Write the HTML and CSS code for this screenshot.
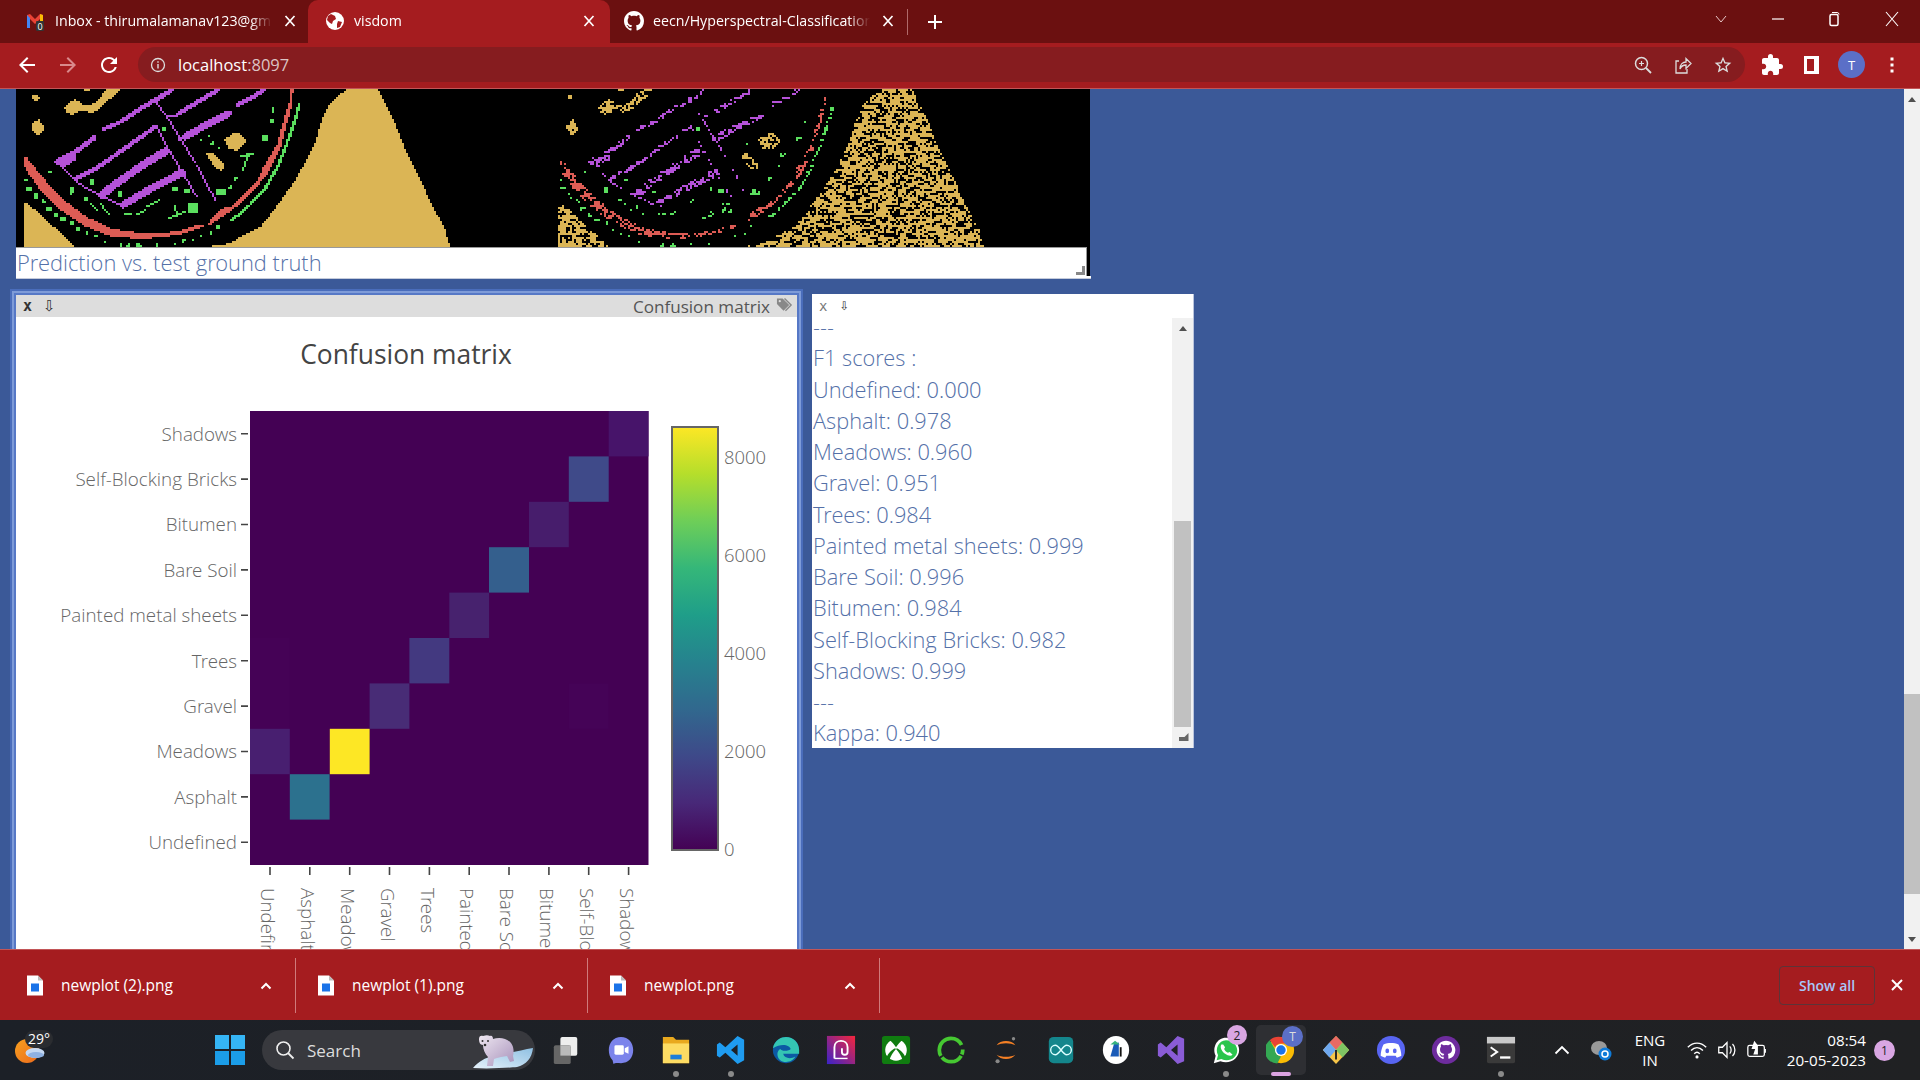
FILE: index.html
```html
<!DOCTYPE html>
<html lang="en">
<head>
<meta charset="utf-8">
<title>visdom</title>
<link rel="stylesheet" href="styles.css">
</head>
<body>
<header class="tabstrip">
  <div class="tab tab-first">
    <svg class="tab-icon" viewBox="0 0 20 20"><path d="M2 17V4l3-1 5 5 5-5 3 1v13h-3V8l-5 5-5-5v9z" fill="#ea4335"/><path d="M2 17V4l3 3v10z" fill="#4285f4"/><path d="M18 4v6l-3 2V3z" fill="#fbbc04"/><rect x="11" y="10" width="8" height="10" rx="1" fill="#333"/><text x="15" y="18.5" class="tab-badge-text">0</text></svg>
    <span class="tab-title">Inbox - thirumalamanav123@gmail.com</span>
    <svg class="tab-x" viewBox="0 0 12 12"><path d="M1.500 1l9 10M10.500 1l-9 10" stroke="#fff" stroke-width="1.700"/></svg>
  </div>
  <div class="tab tab-active">
    <svg class="tab-icon" viewBox="0 0 20 20"><circle cx="10" cy="10" r="9" fill="#fff"/><path d="M6 3l4 2 1 3-3 2-1 3-2-1-3-3 1-4zM13 10l4 1-2 5-3 1 0-4z" fill="#a51c1f"/></svg>
    <span class="tab-title">visdom</span>
    <svg class="tab-x" viewBox="0 0 12 12"><path d="M1.500 1l9 10M10.500 1l-9 10" stroke="#fff" stroke-width="1.700"/></svg>
  </div>
  <div class="tab tab-third">
    <svg class="tab-icon" viewBox="0 0 16 16"><path fill="#fff" d="M8 0C3.58 0 0 3.58 0 8c0 3.54 2.29 6.53 5.47 7.59.4.07.55-.17.55-.38 0-.19-.01-.82-.01-1.49-2.01.37-2.53-.49-2.69-.94-.09-.23-.48-.94-.82-1.13-.28-.15-.68-.52-.01-.53.63-.01 1.08.58 1.23.82.72 1.21 1.87.87 2.33.66.07-.52.28-.87.51-1.07-1.78-.2-3.64-.89-3.64-3.95 0-.87.31-1.59.82-2.15-.08-.2-.36-1.02.08-2.12 0 0 .67-.21 2.2.82.64-.18 1.32-.27 2-.27.68 0 1.36.09 2 .27 1.53-1.04 2.2-.82 2.2-.82.44 1.1.16 1.92.08 2.12.51.56.82 1.27.82 2.15 0 3.07-1.87 3.75-3.65 3.95.29.25.54.73.54 1.48 0 1.07-.01 1.93-.01 2.2 0 .21.15.46.55.38A8.013 8.013 0 0016 8c0-4.42-3.58-8-8-8z"/></svg>
    <span class="tab-title">eecn/Hyperspectral-Classification</span>
    <svg class="tab-x" viewBox="0 0 12 12"><path d="M1.500 1l9 10M10.500 1l-9 10" stroke="#fff" stroke-width="1.700"/></svg>
  </div>
  <span class="tab-sep"></span>
  <svg class="new-tab" viewBox="0 0 16 16"><path d="M8 1v14M1 8h14" stroke="#fff" stroke-width="2"/></svg>
  <div class="win-controls">
    <svg class="win-ctl" viewBox="0 0 16 16"><path d="M3 5l5 6 5-6" fill="none" stroke="#e8c8c8" stroke-width="1"/></svg>
    <svg class="win-ctl" viewBox="0 0 16 16"><path d="M2 8h12" stroke="#fff" stroke-width="1.200"/></svg>
    <svg class="win-ctl" viewBox="0 0 16 16"><rect x="3" y="3.500" width="8" height="11" rx="1.500" fill="none" stroke="#fff" stroke-width="1.500"/><path d="M5 1.500h5a2 2 0 012 2" fill="none" stroke="#fff"/></svg>
    <svg class="win-ctl" viewBox="0 0 16 16"><path d="M2 1l12 14M14 1L2 15" stroke="#fff" stroke-width="1.100"/></svg>
  </div>
</header>

<nav class="toolbar">
  <svg class="nav-icon" viewBox="0 0 24 24"><path fill="#fff" d="M20 11H7.830l5.590-5.590L12 4l-8 8 8 8 1.410-1.410L7.830 13H20v-2z"/></svg>
  <svg class="nav-icon" viewBox="0 0 24 24"><path fill="#d98a8c" d="M4 11h12.170l-5.590-5.590L12 4l8 8-8 8-1.410-1.410L16.170 13H4v-2z"/></svg>
  <svg class="nav-icon" viewBox="0 0 24 24"><path fill="#fff" d="M17.650 6.350A7.958 7.958 0 0012 4c-4.420 0-7.990 3.580-7.990 8s3.570 8 7.990 8c3.730 0 6.840-2.550 7.730-6h-2.080A5.990 5.990 0 0112 18c-3.310 0-6-2.690-6-6s2.690-6 6-6c1.660 0 3.140.690 4.220 1.780L13 11h7V4l-2.350 2.350z"/></svg>
  <div class="omnibox">
    <svg class="omni-info" viewBox="0 0 16 16"><circle cx="8" cy="8" r="6.500" fill="none" stroke="#ddd" stroke-width="1.300"/><path d="M8 7v4.500M8 4.300v1.400" stroke="#ddd" stroke-width="1.400"/></svg>
    <span class="url">localhost<span class="url-port">:8097</span></span>
    <div class="omni-actions">
      <svg class="omni-icon" viewBox="0 0 20 20"><circle cx="8.500" cy="8.500" r="6" fill="none" stroke="#ddd" stroke-width="1.500"/><path d="M13 13l5 5" stroke="#ddd" stroke-width="1.800"/><path d="M8.500 6v5M6 8.500h5" stroke="#ddd" stroke-width="1.200"/></svg>
      <svg class="omni-icon" viewBox="0 0 20 20"><path d="M6 6H3v12h11v-4" fill="none" stroke="#ddd" stroke-width="1.300"/><path d="M7 14c0-5 3-7 6-7V3.500L18 8.500l-5 5V10c-3 0-5 1.500-6 4z" fill="none" stroke="#ddd" stroke-width="1.300"/></svg>
      <svg class="omni-icon" viewBox="0 0 24 24"><path fill="#ddd" d="M22 9.240l-7.190-.620L12 2 9.190 8.630 2 9.240l5.460 4.730L5.820 21 12 17.270 18.180 21l-1.630-7.030L22 9.240zM12 15.400l-3.760 2.270 1-4.280-3.320-2.880 4.380-.380L12 6.100l1.710 4.040 4.380.380-3.320 2.880 1 4.280L12 15.400z"/></svg>
    </div>
  </div>
  <div class="tool-actions">
    <svg class="nav-icon" viewBox="0 0 24 24"><path fill="#fff" d="M20.500 11H19V7c0-1.100-.9-2-2-2h-4V3.500a2.500 2.500 0 00-5 0V5H4c-1.100 0-1.990.9-1.990 2v3.800H3.500c1.490 0 2.700 1.210 2.700 2.700s-1.210 2.700-2.700 2.700H2V20c0 1.100.9 2 2 2h3.800v-1.500c0-1.490 1.210-2.700 2.700-2.700s2.700 1.210 2.700 2.700V22H17c1.100 0 2-.9 2-2v-4h1.500a2.500 2.500 0 000-5z"/></svg>
    <svg class="nav-icon" viewBox="0 0 24 24"><path fill="#fff" d="M5 3h15v18H5z"/><path fill="#a51c1f" d="M8 6h7v12H8z"/></svg>
    <span class="avatar">T</span>
    <svg class="nav-icon" viewBox="0 0 24 24"><path d="M12 4.500v3M12 10.500v3M12 16.500v3" stroke="#fff" stroke-width="3"/></svg>
  </div>
</nav>

<main class="viewport">
  <div class="desktop">
    <section class="pane pane-image">
      <canvas id="maps" class="maps" width="537" height="79"></canvas>
      <div class="caption">Prediction vs. test ground truth<span class="resize-mark"></span></div>
      <div class="caption-foot"></div>
    </section>

    <section class="pane pane-plot">
      <div class="plot-bar">
        <span class="bar-x">x</span>
        <span class="bar-down">⇩</span>
        <span class="plot-bar-title">Confusion matrix</span>
        <svg class="bar-tag" viewBox="0 0 18 16"><path d="M1 1h6l7 7-6 6-7-7z" fill="#888"/><path d="M9 1l7 7-6 6" fill="none" stroke="#888" stroke-width="1.500"/><circle cx="4" cy="4" r="1.200" fill="#ddd"/></svg>
      </div>
      <svg class="plot" viewBox="16 317 781 640">
        <defs>
          <linearGradient id="viridis" x1="0" y1="1" x2="0" y2="0">
            <stop offset="0" stop-color="#440154"/><stop offset=".111" stop-color="#482878"/>
            <stop offset=".222" stop-color="#3e4989"/><stop offset=".333" stop-color="#31688e"/>
            <stop offset=".444" stop-color="#26828e"/><stop offset=".556" stop-color="#1f9e89"/>
            <stop offset=".667" stop-color="#35b779"/><stop offset=".778" stop-color="#6ece58"/>
            <stop offset=".889" stop-color="#b5de2b"/><stop offset="1" stop-color="#fde725"/>
          </linearGradient>
        </defs>
        <text x="406" y="364" class="plot-title" text-anchor="middle">Confusion matrix</text>
        <rect x="250" y="411" width="398.500" height="454" fill="#440154"/>
        <rect x="250" y="638" width="39.800" height="91" fill="#450256"/>
        <rect x="568.800" y="683.400" width="39.800" height="45.400" fill="#450357"/>
        <rect x="608.700" y="411" width="39.800" height="45.400" fill="#47146a"/>
        <rect x="568.800" y="456.400" width="39.900" height="45.400" fill="#3f4a89"/>
        <rect x="529" y="501.800" width="39.800" height="45.400" fill="#471d6c"/>
        <rect x="489" y="547.200" width="40" height="45.400" fill="#345f8d"/>
        <rect x="449.300" y="592.600" width="39.800" height="45.400" fill="#47226e"/>
        <rect x="409.400" y="638" width="39.900" height="45.400" fill="#433980"/>
        <rect x="369.600" y="683.400" width="39.800" height="45.400" fill="#482c76"/>
        <rect x="250" y="728.800" width="39.800" height="45.400" fill="#481f70"/>
        <rect x="329.800" y="728.800" width="39.800" height="45.400" fill="#fde725"/>
        <rect x="289.800" y="774.200" width="39.800" height="45.400" fill="#2c718e"/>
        <g class="tick-y" text-anchor="end">
          <text x="237" y="440.500">Shadows</text><text x="237" y="485.500">Self-Blocking Bricks</text>
          <text x="237" y="531">Bitumen</text><text x="237" y="576.500">Bare Soil</text>
          <text x="237" y="621.500">Painted metal sheets</text><text x="237" y="667.500">Trees</text>
          <text x="237" y="712.500">Gravel</text><text x="237" y="758">Meadows</text>
          <text x="237" y="803.500">Asphalt</text><text x="237" y="848.500">Undefined</text>
        </g>
        <path class="ticks" d="M241 433.700h7M241 479.100h7M241 524.500h7M241 569.900h7M241 615.300h7M241 660.700h7M241 706.100h7M241 751.500h7M241 796.900h7M241 842.300h7M270 867v8M309.800 867v8M349.700 867v8M389.500 867v8M429.400 867v8M469.200 867v8M509 867v8M548.900 867v8M588.700 867v8M628.600 867v8"/>
        <g class="tick-x">
          <text transform="translate(261 888) rotate(90)">Undefined</text>
          <text transform="translate(301 888) rotate(90)">Asphalt</text>
          <text transform="translate(341 888) rotate(90)">Meadows</text>
          <text transform="translate(381 888) rotate(90)">Gravel</text>
          <text transform="translate(421 888) rotate(90)">Trees</text>
          <text transform="translate(460 888) rotate(90)">Painted metal sheets</text>
          <text transform="translate(500 888) rotate(90)">Bare Soil</text>
          <text transform="translate(540 888) rotate(90)">Bitumen</text>
          <text transform="translate(580 888) rotate(90)">Self-Blocking Bricks</text>
          <text transform="translate(620 888) rotate(90)">Shadows</text>
        </g>
        <rect x="672" y="427" width="46" height="423" fill="url(#viridis)" stroke="#666" stroke-width="2"/>
        <g class="tick-bar">
          <text x="724" y="464">8000</text><text x="724" y="562">6000</text>
          <text x="724" y="660">4000</text><text x="724" y="758">2000</text><text x="724" y="856">0</text>
        </g>
      </svg>
    </section>

    <section class="pane pane-text">
      <div class="text-bar"><span class="text-x">x</span><span class="text-down">⇩</span></div>
      <div class="text-main">
        <div class="text-lines">
          <div>---</div><div>F1 scores :</div><div>Undefined: 0.000</div><div>Asphalt: 0.978</div>
          <div>Meadows: 0.960</div><div>Gravel: 0.951</div><div>Trees: 0.984</div>
          <div>Painted metal sheets: 0.999</div><div>Bare Soil: 0.996</div><div>Bitumen: 0.984</div>
          <div>Self-Blocking Bricks: 0.982</div><div>Shadows: 0.999</div><div>---</div><div>Kappa: 0.940</div>
        </div>
        <div class="text-scroll">
          <span class="arrow-up small"></span>
          <span class="text-thumb"></span>
          <span class="text-corner"></span>
        </div>
      </div>
    </section>
  </div>
  <aside class="page-scroll">
    <span class="arrow-up"></span>
    <span class="page-thumb"></span>
    <span class="arrow-down"></span>
  </aside>
</main>

<footer class="downloads">
  <div class="dl-item">
    <svg class="dl-file" viewBox="0 0 16 20"><path d="M0 0h11l5 5v15H0z" fill="#fff"/><path d="M11 0l5 5h-5z" fill="#bbb"/><rect x="4" y="8" width="8" height="8" fill="#1a73e8"/></svg>
    <span class="dl-name">newplot (2).png</span>
    <svg class="dl-caret" viewBox="0 0 12 8"><path d="M1.500 6.500L6 2l4.500 4.500" fill="none" stroke="#fff" stroke-width="2"/></svg>
  </div>
  <div class="dl-item">
    <svg class="dl-file" viewBox="0 0 16 20"><path d="M0 0h11l5 5v15H0z" fill="#fff"/><path d="M11 0l5 5h-5z" fill="#bbb"/><rect x="4" y="8" width="8" height="8" fill="#1a73e8"/></svg>
    <span class="dl-name">newplot (1).png</span>
    <svg class="dl-caret" viewBox="0 0 12 8"><path d="M1.500 6.500L6 2l4.500 4.500" fill="none" stroke="#fff" stroke-width="2"/></svg>
  </div>
  <div class="dl-item">
    <svg class="dl-file" viewBox="0 0 16 20"><path d="M0 0h11l5 5v15H0z" fill="#fff"/><path d="M11 0l5 5h-5z" fill="#bbb"/><rect x="4" y="8" width="8" height="8" fill="#1a73e8"/></svg>
    <span class="dl-name">newplot.png</span>
    <svg class="dl-caret" viewBox="0 0 12 8"><path d="M1.500 6.500L6 2l4.500 4.500" fill="none" stroke="#fff" stroke-width="2"/></svg>
  </div>
  <button class="show-all">Show all</button>
  <svg class="dl-close" viewBox="0 0 12 12"><path d="M1 1l10 10M11 1L1 11" stroke="#fff" stroke-width="2"/></svg>
</footer>

<footer class="taskbar">
  <div class="weather">
    <svg class="weather-art" viewBox="0 0 30 26">
      <defs><linearGradient id="sun" x1="0" y1="0" x2="1" y2="1"><stop offset="0" stop-color="#f7a01f"/><stop offset="1" stop-color="#ec6a1c"/></linearGradient></defs>
      <circle cx="12" cy="13" r="12" fill="url(#sun)"/>
      <ellipse cx="20" cy="15" rx="9.500" ry="5" fill="#c5d8f2"/>
      <ellipse cx="21" cy="17" rx="8" ry="3" fill="#8fb1e2"/>
    </svg>
    <span class="weather-temp">29°</span>
  </div>
  <svg class="tb-win" viewBox="0 0 30 30"><path fill="#35b5f5" d="M0 0h14v14H0zM16 0h14v14H16z"/><path fill="#1b9de8" d="M0 16h14v14H0zM16 16h14v14H16z"/></svg>
  <div class="tb-search">
    <svg class="tb-search-icon" viewBox="0 0 20 20"><circle cx="8.500" cy="8.500" r="6.500" fill="none" stroke="#eee" stroke-width="1.600"/><path d="M13 13l5.500 5.500" stroke="#eee" stroke-width="1.800"/></svg>
    <span class="tb-search-text">Search</span>
    <svg class="tb-bear" viewBox="0 0 64 40">
      <defs>
        <linearGradient id="ice" x1="0" y1="1" x2="1" y2="0"><stop offset="0" stop-color="#e6f2fb"/><stop offset="1" stop-color="#8fc0e2"/></linearGradient>
        <linearGradient id="fur" x1="0" y1="0" x2="1" y2="1"><stop offset="0" stop-color="#efe8f2"/><stop offset="1" stop-color="#a892bb"/></linearGradient>
      </defs>
      <path d="M2 38c6-7 12-10 20-12 14-2 28-6 40-8-1 10-7 17-16 19-10 1-30 2-44 1z" fill="url(#ice)"/>
      <path d="M8 9c0-3 2-4 4-3 3-1 5-1 7 0 2-1 3 1 3 3 6-2 14-1 18 4 3 4 3 9 2 13l1 5-4 1-3-6-6 1-4 1-3 1-1 7h-6l1-9c-3-3-5-8-5-12-3 0-4-3-4-6z" fill="url(#fur)"/>
      <circle cx="11.500" cy="11" r="1" fill="#333"/><circle cx="17" cy="11" r="1" fill="#333"/><circle cx="14" cy="15" r="1.300" fill="#333"/>
    </svg>
  </div>
  <div class="tb-apps">
    <svg class="tb-app" viewBox="0 0 32 32"><rect x="10" y="2" width="18" height="20" rx="2" fill="#eee"/><rect x="3" y="11" width="18" height="20" rx="2" fill="#666"/><rect x="10" y="11" width="11" height="11" fill="#bbb"/></svg>
    <svg class="tb-app" viewBox="0 0 32 32"><path d="M16 2c8 0 13 6 13 14s-5 14-13 14c-3 0-6-1-8 1l-1-4c-3-3-4-7-4-11C3 8 8 2 16 2z" fill="#7b83eb"/><rect x="9" y="11" width="10" height="10" rx="1.500" fill="#fff"/><path d="M20 14l4-2v8l-4-2z" fill="#fff"/></svg>
    <span class="tb-slot dot">
      <svg class="tb-app" viewBox="0 0 32 32"><path d="M2 2h11l3 3h14v25H2z" fill="#e9a91e"/><rect x="2" y="9" width="28" height="21" fill="#fddc63"/><rect x="10" y="21" width="12" height="5" fill="#1d7ed8"/></svg>
    </span>
    <span class="tb-slot dot">
      <svg class="tb-app" viewBox="0 0 32 32"><path d="M23 1l7 4v22l-7 4-13-12-6 5-3-2V10l3-2 6 5zM23 10l-7 6 7 6z" fill="#1f9cf0" fill-rule="evenodd"/></svg>
    </span>
    <svg class="tb-app" viewBox="0 0 32 32"><circle cx="16" cy="16" r="14" fill="#0c59a4"/><path d="M2 14C4 5 11 2 16 2c8 0 14 6 14 14v4H13c1 5 8 6 13 3-3 6-12 8-17 3-3-3-3-9 1-11 1 3 10 2 11 0-1-4-9-7-19-1z" fill="#34c6b3"/></svg>
    <svg class="tb-app" viewBox="0 0 32 32"><defs><linearGradient id="ps" x1="0" y1="1" x2="1" y2="0"><stop offset="0" stop-color="#3a23c9"/><stop offset="1" stop-color="#f5263c"/></linearGradient></defs><rect x="1" y="1" width="30" height="30" fill="url(#ps)"/><path d="M9 25V13c0-9 14-9 14 0v5c0 4-6 4-6 0v-4" fill="none" stroke="#fff" stroke-width="2"/><path d="M9 25h14" stroke="#fff" stroke-width="1.500"/></svg>
    <svg class="tb-app" viewBox="0 0 32 32"><rect x="1" y="1" width="30" height="30" rx="3" fill="#107c10"/><circle cx="16" cy="16" r="11.500" fill="#fff"/><path d="M8 5c4 2 6 5 8 8 2-3 4-6 8-8l-3-1H11zM6 24c1-4 5-8 9-10l1 1c-3 3-6 8-7 12zM26 24c-1-4-5-8-9-10l-1 1c3 3 6 8 7 12z" fill="#107c10"/></svg>
    <svg class="tb-app" viewBox="0 0 32 32"><circle cx="16" cy="16" r="12.500" fill="none" stroke="#46c832" stroke-width="4" stroke-dasharray="5 1.500 24 2 40"/></svg>
    <svg class="tb-app" viewBox="0 0 32 32"><path d="M6 11c4-6 16-6 20 0-5-3-15-3-20 0zM6 21c4 6 16 6 20 0-5 3-15 3-20 0z" fill="#f58025"/><circle cx="24" cy="4" r="1.800" fill="#888"/><circle cx="7" cy="28" r="2.200" fill="#888"/></svg>
    <svg class="tb-app" viewBox="0 0 32 32"><rect x="3" y="2" width="26" height="28" rx="5" fill="#14868c"/><path d="M10 11a5 5 0 100 10c4 0 8-10 12-10a5 5 0 110 10c-4 0-8-10-12-10z" fill="none" stroke="#dff" stroke-width="1.500"/></svg>
    <svg class="tb-app" viewBox="0 0 32 32"><ellipse cx="16" cy="16" rx="14" ry="15" fill="#fff"/><path d="M10 23l4-14 5-1v15z" fill="#1a5bb8"/><path d="M10 10l5-4 5 4z" fill="#36b37e"/><path d="M20 13h2v10h-2z" fill="#111"/></svg>
    <svg class="tb-app" viewBox="0 0 32 32"><path d="M23 1l7 3v24l-7 3-12-12-6 5-3-2V10l3-2 6 5zM23 10l-7 6 7 6z" fill="#8a5cd6" fill-rule="evenodd"/></svg>
    <span class="tb-slot dot">
      <svg class="tb-app" viewBox="0 0 32 32"><path d="M3 30l2-8C1 14 6 3 16 3c9 0 14 7 14 13 0 9-10 16-20 12z" fill="#fff"/><path d="M6 27l1.500-5.500C4 15 8 5.500 16 5.500c8 0 12 6 12 11 0 8-9 13-17 9z" fill="#2ac54d"/><path d="M11 10c-2 3 1 8 4 10s6 3 8 1l-3-3-2 1c-2-1-3-2-4-4l1-2-2-3z" fill="#fff"/></svg>
      <span class="tb-badge">2</span>
    </span>
    <span class="tb-slot active">
      <svg class="tb-app" viewBox="0 0 32 32"><circle cx="16" cy="16" r="14" fill="#fbbc04"/><path d="M16 2a14 14 0 0112.100 7H16a7 7 0 00-6.300 4L4 5.500A14 14 0 0116 2z" fill="#ea4335"/><path d="M4 5.500l6 10.500a7 7 0 006 7l-4 7.500A14 14 0 014 5.500z" fill="#34a853"/><circle cx="16" cy="16" r="6.500" fill="#fff"/><circle cx="16" cy="16" r="5" fill="#1a73e8"/></svg>
      <span class="tb-avatar">T</span>
    </span>
    <svg class="tb-app" viewBox="0 0 32 32"><path d="M16 1l14 15-14 15L2 16z" fill="#f6c548"/><path d="M16 1l7 7-7 8-7-8z" fill="#e96a64"/><path d="M23 8l7 8-7 8-7-8z" fill="#7fc463"/><path d="M9 8l7 8-7 8-7-8z" fill="#6fa9f0"/><path d="M16 16v10" stroke="#222" stroke-width="2"/></svg>
    <svg class="tb-app" viewBox="0 0 32 32"><circle cx="16" cy="16" r="15" fill="#5865f2"/><path d="M8 10c5-2 11-2 16 0 2 4 3 8 3 12-2 1-4 2-5 2l-1-2H11l-1 2c-1 0-3-1-5-2 0-4 1-8 3-12z" fill="#fff"/><ellipse cx="12" cy="17" rx="2" ry="2.500" fill="#5865f2"/><ellipse cx="20" cy="17" rx="2" ry="2.500" fill="#5865f2"/></svg>
    <svg class="tb-app" viewBox="0 0 32 32"><circle cx="16" cy="16" r="15" fill="#6e2c9e"/><g transform="translate(6 6) scale(1.250)"><path fill="#fff" d="M8 0C3.580 0 0 3.580 0 8c0 3.540 2.290 6.530 5.470 7.590.4.070.55-.17.55-.38v-1.490c-2.230.48-2.690-1.070-2.690-1.070-.37-.93-.9-1.180-.9-1.180-.73-.5.050-.49.050-.49.810.06 1.230.83 1.230.83.720 1.220 1.870.87 2.330.660.070-.520.280-.870.510-1.070-1.780-.2-3.640-.89-3.640-3.950 0-.870.310-1.590.820-2.150-.080-.2-.36-1.020.080-2.120 0 0 .67-.21 2.200.820a7.600 7.600 0 014 0c1.530-1.040 2.200-.82 2.200-.82.440 1.100.160 1.920.080 2.120.510.560.820 1.270.820 2.150 0 3.070-1.870 3.750-3.650 3.950.290.250.540.730.540 1.480v2.200c0 .210.150.460.550.38A8 8 0 0016 8c0-4.420-3.580-8-8-8z"/></g></svg>
    <span class="tb-slot dot">
      <svg class="tb-app" viewBox="0 0 32 32"><rect x="1" y="2" width="30" height="28" rx="2" fill="#3a3a3a"/><rect x="1" y="2" width="30" height="7" fill="#c9c9c9"/><path d="M5 13l7 5-7 5" fill="none" stroke="#fff" stroke-width="2"/><path d="M15 24h11" stroke="#fff" stroke-width="2.500"/></svg>
    </span>
  </div>
  <div class="tray">
    <svg class="tray-caret" viewBox="0 0 16 10"><path d="M1.500 8.500L8 2l6.500 6.500" fill="none" stroke="#fff" stroke-width="1.800"/></svg>
    <svg class="tray-cloud" viewBox="0 0 22 22"><ellipse cx="9" cy="9" rx="8" ry="7" fill="#999"/><circle cx="15" cy="15" r="6.500" fill="#0f7bd8"/><circle cx="15" cy="15" r="3" fill="none" stroke="#fff" stroke-width="1.500"/></svg>
    <div class="tray-lang"><span>ENG</span><span>IN</span></div>
    <svg class="tray-icon" viewBox="0 0 24 24"><path d="M2 9c6-6 14-6 20 0M5.500 12.500c4-4 9-4 13 0M9 16c2-2 4-2 6 0" fill="none" stroke="#fff" stroke-width="1.600"/><circle cx="12" cy="19.500" r="1.700" fill="#fff"/></svg>
    <svg class="tray-icon" viewBox="0 0 24 24"><path d="M3 9h4l5-5v16l-5-5H3z" fill="none" stroke="#fff" stroke-width="1.400"/><path d="M15 8c2 2 2 6 0 8M18 5.500c3.500 3.500 3.500 9.500 0 13" fill="none" stroke="#fff" stroke-width="1.400"/></svg>
    <svg class="tray-icon" viewBox="0 0 24 24"><rect x="2" y="7" width="18" height="12" rx="2" fill="none" stroke="#fff" stroke-width="1.400"/><path d="M21 11v4" stroke="#fff" stroke-width="1.500"/><path d="M9 2l-3 9h4l-2 6h5V7z" fill="#fff"/></svg>
    <div class="tray-clock"><span>08:54</span><span>20-05-2023</span></div>
    <span class="tray-badge">1</span>
  </div>
</footer>
<script src="maps.js"></script>
</body>
</html>
```

FILE: styles.css
```css
* { box-sizing: border-box; }
html, body { margin: 0; height: 100%; }
body {
  display: flex;
  flex-direction: column;
  height: 100vh;
  overflow: hidden;
  font-family: "Open Sans", "Noto Sans", sans-serif;
  background: #3b5998;
}

/* tab strip */
.tabstrip { flex: 0 0 43px; display: flex; align-items: center; background: #6b1010; color: #fff; }
.tab { height: 43px; display: flex; align-items: center; font-size: 14.200px; flex: none; padding-bottom: 2px; }
.tab-first { width: 308px; padding-left: 25px; }
.tab-active { width: 302px; padding-left: 17px; background: #a51c1f; border-radius: 10px 10px 0 0; }
.tab-third { width: 297px; padding-left: 14px; }
.tab-icon { width: 20px; height: 20px; flex: none; margin-right: 9px; }
.tab-first .tab-icon { margin-right: 10px; }
.tab-badge-text { font-size: 9px; fill: #fff; text-anchor: middle; }
.tab-title {
  flex: 1;
  min-width: 0;
  white-space: nowrap;
  overflow: hidden;
  -webkit-mask-image: linear-gradient(90deg, #000 90%, transparent);
  mask-image: linear-gradient(90deg, #000 90%, transparent);
}
.tab-x { flex: none; width: 12px; height: 12px; margin: 0 15px 0 12px; }
.tab-first .tab-x { margin-right: 12px; }
.tab-third .tab-x { margin-right: 13px; }
.tab-sep { width: 1px; height: 26px; background: #b06a6a; }
.new-tab { width: 16px; height: 16px; margin-left: 19px; }
.win-controls { margin-left: auto; display: flex; align-items: center; gap: 41px; padding: 0 20px 6px 0; }
.win-ctl { width: 16px; height: 16px; }

/* toolbar */
.toolbar {
  flex: 0 0 46px;
  display: flex;
  align-items: center;
  background: #a51c1f;
  border-bottom: 1px solid #c25557;
  padding: 0 16px 2px 15px;
  gap: 17px;
}
.nav-icon { width: 24px; height: 24px; flex: none; }
.omnibox {
  flex: 1;
  height: 35px;
  display: flex;
  align-items: center;
  background: #861c1f;
  border-radius: 18px;
  padding: 0 12px 0 14px;
  color: #fff;
}
.omni-info { width: 16px; height: 16px; margin-right: 12px; margin-left: -2px; }
.url { font-size: 16.500px; }
.url-port { color: #dcc4c4; }
.omni-actions { margin-left: auto; display: flex; gap: 20px; }
.omni-icon { width: 20px; height: 20px; }
.tool-actions { display: flex; align-items: center; gap: 15px; margin-left: -2px; }
.avatar {
  width: 27px; height: 27px; border-radius: 50%;
  background: #5b6fc7; color: #fff;
  display: flex; align-items: center; justify-content: center;
  font-size: 13px;
}

/* page area */
.viewport { flex: 1; min-height: 0; display: flex; overflow: hidden; }
.desktop { flex: 1; position: relative; background: #3b5998; overflow: hidden; }
.pane { position: absolute; background: #fff; }

.pane-image { left: 16px; top: 0; width: 1074px; height: 190px; display: flex; flex-direction: column; background: #000; }
.maps { width: 1074px; height: 158px; display: block; image-rendering: pixelated; background: #000; flex: none; }
.caption {
  position: relative;
  width: 1071px;
  height: 29px;
  flex: none;
  background: #fff;
  border-top: 1px solid #999;
  border-right: 1px solid #999;
  color: #5470a8;
  font-family: "Open Sans Light", "Open Sans", sans-serif;
  font-size: 21.900px;
  font-weight: 300;
  line-height: 29px;
  padding-left: 1px;
}
.caption-foot { width: 1075px; height: 3px; flex: none; background: #fff; border-bottom: 1px solid #c4cbdb; }
.resize-mark {
  position: absolute; right: 1px; bottom: 1px; width: 9px; height: 9px;
  border-right: 3px solid #888; border-bottom: 3px solid #888;
}

.pane-plot {
  left: 10px; top: 200px; width: 793px; height: 680px;
  padding: 6px 6px 0;
  box-shadow: inset 0 0 0 2px #4a6dbb, inset 0 0 0 4px #7e9bd8, inset 0 0 0 6px #5678c6;
  overflow: hidden;
}
.plot-bar {
  height: 22px;
  display: flex;
  align-items: center;
  background: #ddd;
  padding: 0 4px 0 7px;
  color: #444;
}
.bar-x { font-family: "DejaVu Sans Mono", monospace; font-weight: 700; font-size: 15px; line-height: 1; color: #333; }
.bar-down { font-size: 15px; margin-left: 11px; color: #333; font-family: "DejaVu Sans", sans-serif; }
.plot-bar-title { margin-left: auto; font-size: 17.100px; font-weight: 400; color: #555; }
.bar-tag { width: 17px; height: 16px; margin-left: 6px; margin-bottom: 3px; }
.plot { display: block; width: 781px; height: 640px; }
.plot-title { font-size: 26.400px; fill: #444; }
.tick-y text, .tick-x text { font-family: "Open Sans Light", "Open Sans", sans-serif; font-size: 18.800px; font-weight: 300; fill: #666; }
.tick-bar text { font-family: "Open Sans Light", "Open Sans", sans-serif; font-size: 18.400px; font-weight: 300; fill: #666; }
.ticks { stroke: #444; stroke-width: 1.600; fill: none; }

.pane-text { left: 812px; top: 205px; width: 382px; height: 454px; display: flex; flex-direction: column; border-right: 1px solid #b9c4dd; }
.text-bar { height: 24px; flex: none; display: flex; align-items: center; padding-left: 7px; color: #777; }
.text-x { font-size: 14px; font-weight: 300; font-family: "DejaVu Sans Mono", monospace; }
.text-down { font-size: 12px; margin-left: 12px; color: #333; font-family: "DejaVu Sans", sans-serif; }
.text-main { flex: 1; min-height: 0; display: flex; }
.text-lines {
  flex: 1;
  overflow: hidden;
  padding-left: 1px;
  margin-top: -7px;
  color: #5470a8;
  font-family: "Open Sans Light", "Open Sans", sans-serif;
  font-size: 21.800px;
  font-weight: 300;
  line-height: 31.250px;
}
.text-scroll { flex: 0 0 21px; background: #f1f1f1; display: flex; flex-direction: column; align-items: center; }
.text-scroll .arrow-up { margin-top: 8px; }
.text-thumb { width: 17px; height: 206px; margin-top: 190px; background: #c1c1c1; flex: none; }
.text-corner { width: 10px; height: 8px; margin-top: 6px; margin-left: 2px; background: #666; clip-path: polygon(100% 0, 100% 100%, 0 100%, 0 50%, 60% 50%); }

.page-scroll { flex: 0 0 16px; background: #f1f1f1; display: flex; flex-direction: column; align-items: center; padding: 8px 0 7px; }
.arrow-up, .arrow-down { width: 0; height: 0; border-left: 4px solid transparent; border-right: 4px solid transparent; flex: none; }
.arrow-up { border-bottom: 5px solid #505050; }
.arrow-down { border-top: 5px solid #505050; margin-top: auto; }
.page-thumb { width: 16px; height: 200px; margin-top: 592px; background: #c1c1c1; flex: none; }

/* downloads */
.downloads {
  flex: 0 0 71px;
  display: flex;
  align-items: center;
  background: #a51c1f;
  border-top: 1px solid #c25557;
  color: #fff;
}
.dl-item { width: 292px; height: 55px; display: flex; align-items: center; padding: 0 21px 0 22px; border-right: 1px solid #d07a7b; flex: none; margin-top: 1px; }
.dl-item:first-child { width: 296px; padding-left: 27px; }
.dl-file { width: 16px; height: 21px; flex: none; margin-right: 18px; }
.dl-name { font-size: 15.500px; line-height: 20px; margin-top: -2px; }
.dl-caret { width: 12px; height: 8px; margin-left: auto; margin-right: 2px; }
.show-all {
  margin-left: auto;
  width: 96px; height: 39px;
  margin-top: 1px;
  background: transparent;
  border: 1px solid #5c3438;
  border-radius: 4px;
  color: #a8c7fa;
  font: 600 14px "Open Sans", sans-serif;
}
.dl-close { width: 12px; height: 12px; margin: 0 17px 0 16px; }

/* taskbar */
.taskbar {
  flex: 0 0 60px;
  display: flex;
  align-items: center;
  padding-left: 13px;
  background: linear-gradient(90deg, #1c2027, #202123);
  color: #fff;
}
.weather { position: relative; width: 202px; height: 44px; flex: none; }
.weather-art { position: absolute; left: 2px; top: 10px; width: 30px; height: 26px; }
.weather-temp {
  position: absolute; left: 12px; top: 2px;
  width: 28px; height: 18px;
  font-size: 14px; line-height: 18px; text-align: center;
  background: #2a2c30; border-radius: 9px;
}
.tb-win { width: 30px; height: 30px; flex: none; }
.tb-search {
  position: relative;
  width: 273px; height: 40px;
  margin-left: 17px;
  flex: none;
  background: #38393e;
  border-radius: 20px;
  display: flex;
  align-items: center;
  padding-left: 13px;
  overflow: hidden;
}
.tb-search-icon { width: 20px; height: 20px; margin-right: 12px; }
.tb-search-text { font-size: 17px; color: #ddd; }
.tb-bear { position: absolute; right: 0; top: 0; width: 64px; height: 40px; }
.tb-apps { display: flex; align-items: center; gap: 25px; margin-left: 16px; flex: none; }
.tb-app { width: 30px; height: 30px; display: block; flex: none; }
.tb-slot { position: relative; width: 30px; height: 30px; flex: none; display: block; }
.tb-slot.dot::after { content: ""; position: absolute; left: 12px; bottom: -12px; width: 6px; height: 6px; border-radius: 50%; background: #8a8a8a; }
.tb-slot.active::before { content: ""; position: absolute; left: -10px; top: -10px; width: 50px; height: 50px; background: #2e2f33; border-radius: 5px; }
.tb-slot.active::after { content: ""; position: absolute; left: 5px; bottom: -11px; width: 20px; height: 4px; border-radius: 2px; background: #dca4e2; }
.tb-slot.active .tb-app { position: relative; }
.tb-badge, .tb-avatar {
  position: absolute; border-radius: 50%;
  display: flex; align-items: center; justify-content: center;
  font-size: 12px;
}
.tb-badge { right: -6px; top: -10px; width: 20px; height: 20px; background: #d9a6e2; color: #222; }
.tb-avatar { right: -7px; top: -9px; width: 21px; height: 21px; background: #5b6fc7; color: #ddd; }
.tray { position: relative; flex: 1; display: flex; align-items: center; padding-left: 38px; }
.tray-caret { width: 16px; height: 10px; flex: none; }
.tray-cloud { width: 22px; height: 22px; margin-left: 20px; flex: none; }
.tray-lang { width: 40px; margin-left: 18px; display: flex; flex-direction: column; align-items: center; font-size: 15px; line-height: 20px; flex: none; }
.tray-icon { width: 22px; height: 22px; margin-left: 8px; flex: none; }
.tray-lang + .tray-icon { margin-left: 16px; }
.tray-clock { width: 90px; margin-left: 8px; display: flex; flex-direction: column; align-items: flex-end; font-size: 15.200px; line-height: 20px; flex: none; }
.tray-badge { width: 21px; height: 21px; margin-left: 8px; border-radius: 50%; background: #d9a6e2; color: #222; font-size: 12px; display: flex; align-items: center; justify-content: center; flex: none; }
```

FILE: maps.js
```js
(function () {
  var cv = document.getElementById('maps');
  var W = cv.width, H = cv.height;
  var off = document.createElement('canvas');
  off.width = W; off.height = H;
  var g = off.getContext('2d');

  var GOLD = '#dbb555', RED = '#dd5c55', GREEN = '#5bdf5f', PURPLE = '#b552d9';

  // shapes are noted in reference units: x = u / 2.8, y = 85 + v / 3 (screen px), origin 16,89
  function X(u) { return (u / 2.8 - 16) / 2; }
  function Y(v) { return (85 + v / 3 - 89) / 2; }

  function poly(pts, color) {
    g.fillStyle = color;
    g.beginPath();
    for (var i = 0; i < pts.length; i += 2) {
      g[i ? 'lineTo' : 'moveTo'](X(pts[i]), Y(pts[i + 1]));
    }
    g.closePath();
    g.fill();
  }
  function line(pts, width, color) {
    g.strokeStyle = color;
    g.lineWidth = width;
    g.lineJoin = 'round';
    g.lineCap = 'round';
    g.beginPath();
    for (var i = 0; i < pts.length; i += 2) {
      g[i ? 'lineTo' : 'moveTo'](X(pts[i]), Y(pts[i + 1]));
    }
    g.stroke();
  }

  function drawScene() {
    poly([568,487,640,475,730,425,770,370,830,280,880,180,905,95,920,60,970,12,1060,12,1075,50,1110,125,1135,195,1170,270,1215,370,1245,430,1262,490,560,490], GOLD);
    poly([70,350,120,395,160,435,215,490,70,490], GOLD);
    poly([180,65,210,42,235,60,265,55,300,12,340,12,300,50,260,85,225,75,200,93,185,80], GOLD);
    poly([225,12,255,12,245,20], GOLD);
    poly([88,35,100,27,115,40,100,50], GOLD);
    poly([88,120,108,102,125,125,120,140,105,150,92,135], GOLD);
    poly([628,165,660,140,692,165,665,200,640,190], GOLD);
    poly([575,205,595,202,630,240,620,258,600,245], GOLD);

    poly([70,210,95,245,130,290,180,345,240,395,310,430,400,445,500,440,555,418,580,425,590,400,620,370,650,365,690,320,720,290,735,250,760,205,775,180,790,120,810,50,815,12,822,12,815,70,800,130,785,190,770,225,750,265,720,305,690,340,650,375,610,405,585,422,555,430,500,450,400,462,310,455,240,425,170,375,115,320,70,250], RED);

    line([838,55,825,110,800,185,775,250,740,315,700,360,650,405], 1.5, GREEN);

    line([290,132,335,112,370,88,410,60,440,42,480,15], 2.2, PURPLE);
    line([500,85,540,60,610,15], 2.2, PURPLE);
    line([665,58,710,35,740,14], 2.2, PURPLE);
    line([520,155,570,125,640,85], 3.4, PURPLE);
    line([160,230,205,205,265,158], 2.4, PURPLE);
    poly([158,230,210,195,215,225,180,245], PURPLE);
    line([215,280,270,250,330,205,435,125], 2.2, PURPLE);
    line([285,330,320,300,400,240,465,198], 3.8, PURPLE);
    line([345,360,400,325,510,262], 3.6, PURPLE);
    line([435,50,470,100,510,170,548,235,605,350], 1, PURPLE);
    line([435,120,470,190,510,260,550,335], 1, PURPLE);
    line([165,235,220,295,285,335,345,362], 1, PURPLE);
    line([470,95,500,90], 1, PURPLE);
    line([500,165,520,155], 1, PURPLE);

    var sq = [455,125,10,12, 560,162,8,8, 580,152,8,6, 590,170,8,10, 610,185,8,6, 760,65,6,22, 755,103,10,12, 735,150,15,20, 655,275,10,10, 640,303,10,8,
      75,305,15,15, 95,325,10,15, 115,345,12,8, 130,365,15,12, 150,385,12,10, 170,395,12,15, 195,410,12,10, 215,425,8,15, 240,440,8,8, 265,450,8,6, 290,465,6,8, 310,470,6,6,
      335,477,8,10, 355,477,10,10, 380,477,15,10, 435,477,8,10, 485,475,6,8, 510,462,8,10, 535,460,10,6, 560,452,8,6, 585,440,8,8, 605,422,12,10,
      195,305,12,22, 250,285,15,15, 235,335,10,15, 330,320,12,15, 480,305,20,10, 515,310,18,15, 605,310,25,22, 525,355,32,30, 70,280,6,8, 135,258,12,6];
    g.fillStyle = GREEN;
    for (var i = 0; i < sq.length; i += 4) {
      g.fillRect(X(sq[i]), Y(sq[i + 1]), sq[i + 2] / 5.6, sq[i + 3] / 6);
    }
    line([670,215,710,205], 1, GREEN);
    line([695,210,680,255], 1, GREEN);
    line([380,390,410,375], 0.8, GREEN);
    line([410,365,445,345], 1, GREEN);
    line([255,355,270,375], 1, GREEN);
    line([280,355,305,390], 1, GREEN);
    line([345,390,370,385], 1, GREEN);
    line([470,400,520,380], 1, GREEN);
    line([490,360,495,390], 1, GREEN);
  }

  drawScene();
  var src = g.getImageData(0, 0, W, H).data;

  var ctx = cv.getContext('2d');
  var out = ctx.createImageData(W, H);
  var d = out.data;
  var seed = 12345;
  function rnd() {
    seed = (seed * 1664525 + 1013904223) >>> 0;
    return (seed >>> 8) / 16777216;
  }
  var split = Math.round((558 - 16) / 2);
  var shift = 267;
  var keepPrev = false;

  for (var y = 0; y < H; y++) {
    for (var x = 0; x < W; x++) {
      var p = (y * W + x) * 4;
      var sx = x, noisy = false;
      if (x >= split) { sx = x - shift; noisy = true; }
      d[p + 3] = 255;
      if (sx < 0 || sx >= W) continue;
      var q = (y * W + sx) * 4;
      if (src[q + 3] < 128) { keepPrev = false; continue; }
      var r = src[q], gg = src[q + 1], b = src[q + 2];
      if (noisy) {
        var isGold = r > 200 && gg > 150 && b < 120;
        var chance = isGold ? (keepPrev ? 0.72 : 0.48) : (keepPrev ? 0.68 : 0.42);
        keepPrev = rnd() < chance;
        if (!keepPrev) continue;
      }
      d[p] = r; d[p + 1] = gg; d[p + 2] = b;
    }
  }
  ctx.putImageData(out, 0, 0);
})();
```
